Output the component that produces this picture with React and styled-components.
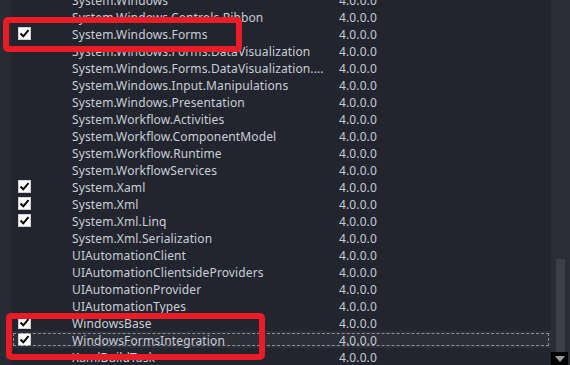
import React from "react";
import { styled, createGlobalStyle } from "styled-components";

const refs = [
  { name: "System.Windows" },
  { name: "System.Windows.Controls.Ribbon" },
  { name: "System.Windows.Forms", checked: true },
  { name: "System.Windows.Forms.DataVisualization" },
  { name: "System.Windows.Forms.DataVisualization...." },
  { name: "System.Windows.Input.Manipulations" },
  { name: "System.Windows.Presentation" },
  { name: "System.Workflow.Activities" },
  { name: "System.Workflow.ComponentModel" },
  { name: "System.Workflow.Runtime" },
  { name: "System.WorkflowServices" },
  { name: "System.Xaml", checked: true },
  { name: "System.Xml", checked: true },
  { name: "System.Xml.Linq", checked: true },
  { name: "System.Xml.Serialization" },
  { name: "UIAutomationClient" },
  { name: "UIAutomationClientsideProviders" },
  { name: "UIAutomationProvider" },
  { name: "UIAutomationTypes" },
  { name: "WindowsBase", checked: true },
  { name: "WindowsFormsIntegration", checked: true, selected: true },
  { name: "XamlBuildTask" },
];

// little white box with a black tick
const Check = () => (
  <CheckBox>
    <svg width="11" height="11" viewBox="0 0 11 11">
      <path d="M1.5 5.5 L4.3 8.3 L9.5 2.2" fill="none" stroke="#000" strokeWidth="2" />
    </svg>
  </CheckBox>
);

const App = () => {
  return (
    <>
      <GlobalStyle />
      <Window>
        <Gutter />
        <List>
          {refs.map((r, i) => (
            <Row key={i} $selected={r.selected}>
              <CheckCell>{r.checked && <Check />}</CheckCell>
              <Name>{r.name}</Name>
              <Version>4.0.0.0</Version>
            </Row>
          ))}
        </List>
        <ScrollBar>
          <Thumb />
          <ArrowDown>
            <svg width="10" height="6" viewBox="0 0 10 6">
              <path d="M0 0 H10 L5 6 Z" fill="#9b9b9b" />
            </svg>
          </ArrowDown>
        </ScrollBar>
        <Mark $left={3} $top={17} $width={239} $height={35} />
        <Mark $left={6} $top={313} $width={259} $height={47} />
      </Window>
    </>
  );
};

export default App;

const GlobalStyle = createGlobalStyle`
body{
    margin: 0;
    background: #22252d;
}
`;
const Window = styled.div`
position: relative;
width: 570px;
height: 365px;
overflow: hidden;
display: flex;
background: #22252d;
font-family: 'Noto Sans', 'Liberation Sans', sans-serif;
font-size: 12px;
letter-spacing: 0.12px;
color: #c9ced7;
`;
const Gutter = styled.div`
width: 11px;
flex-shrink: 0;
background: #282b34;
`;
const List = styled.div`
flex: 1;
margin-top: -9px;
display: flex;
flex-direction: column;
`;
const Row = styled.div`
height: 17px;
flex-shrink: 0;
display: flex;
align-items: center;
box-sizing: border-box;
background: ${p => (p.$selected ? "#2c2f38" : "transparent")};
outline: ${p => (p.$selected ? "1px dashed #8c9098" : "none")};
outline-offset: -3px;
`;
const CheckCell = styled.div`
width: 61px;
flex-shrink: 0;
padding-left: 7px;
box-sizing: border-box;
display: flex;
align-items: center;
`;
const CheckBox = styled.div`
width: 13px;
height: 13px;
background: #fff;
box-sizing: border-box;
border: 1px solid #d0d0d0;
display: flex;
align-items: center;
justify-content: center;
`;
const Name = styled.div`
width: 267px;
flex-shrink: 0;
white-space: nowrap;
overflow: hidden;
line-height: 17px;
padding-top: 1px;
`;
const Version = styled.div`
line-height: 17px;
padding-top: 1px;
color: #c5cbd6;
`;
const ScrollBar = styled.div`
width: 19px;
flex-shrink: 0;
background: #2a2d36;
display: flex;
flex-direction: column;
align-items: center;
justify-content: flex-end;
`;
const Thumb = styled.div`
width: 9px;
height: 93px;
margin-left: -1px;
background: #3c3f49;
`;
const ArrowDown = styled.div`
width: 17px;
height: 13px;
margin-left: -2px;
background: #000;
display: flex;
align-items: center;
justify-content: center;
`;
const Mark = styled.div`
position: absolute;
left: ${p => p.$left}px;
top: ${p => p.$top}px;
width: ${p => p.$width}px;
height: ${p => p.$height}px;
box-sizing: border-box;
border: 6px solid #ea1c26;
border-radius: 5px;
pointer-events: none;
`;
